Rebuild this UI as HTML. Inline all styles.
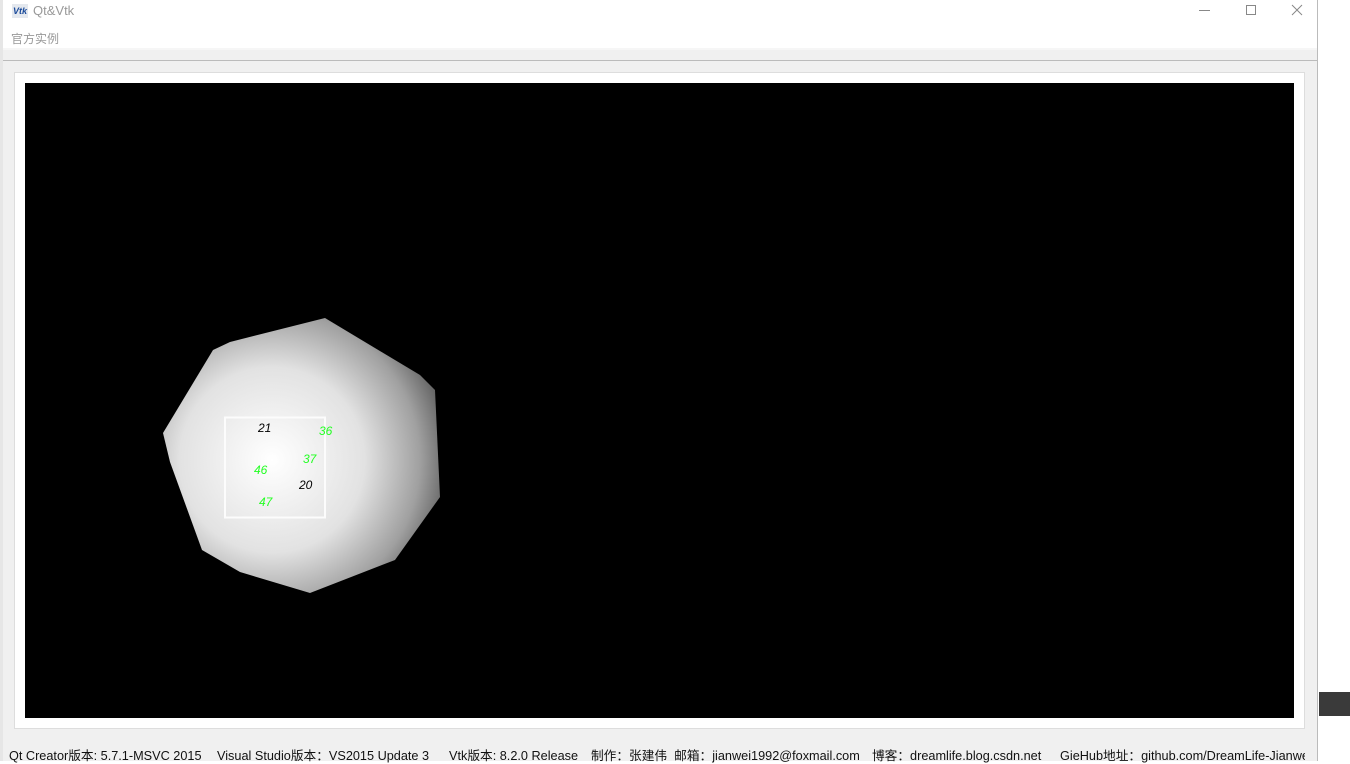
<!DOCTYPE html>
<html><head><meta charset="utf-8"><style>
*{margin:0;padding:0;box-sizing:border-box}
body{width:1350px;height:761px;background:#fff;position:relative;overflow:hidden;font-family:"Liberation Sans","Noto Sans CJK SC",sans-serif}
.win{position:absolute;left:0;top:0;width:1318px;height:761px;background:#f0f0f0;border-right:1px solid #bbb;border-left:3px solid #e6e6e6}
.title{position:absolute;left:0;top:0;width:100%;height:48px;background:#fff}
.t{position:absolute;font-size:13px;color:#999}
.st{position:absolute;top:745px;font-size:12.7px;color:#111;white-space:nowrap}
</style></head><body>
<div class="win">
 <div class="title"></div>
 <div style="position:absolute;left:9px;top:4px;width:16px;height:14px;background:#e4e8ee;color:#1a4a9a;font:bold italic 9px 'Liberation Sans';line-height:14px;text-align:center">Vtk</div>
 <div class="t" style="left:30px;top:3px">Qt&amp;Vtk</div>
 <div class="t" style="left:8px;top:30px;font-size:12px">官方实例</div>
 <div style="position:absolute;left:1196px;top:10px;width:11px;height:1px;background:#888"></div>
 <div style="position:absolute;left:1243px;top:5px;width:10px;height:10px;border:1px solid #888"></div>
 <svg style="position:absolute;left:1288px;top:4px" width="12" height="12"><path d="M1 1L11 11M11 1L1 11" stroke="#888" stroke-width="1"/></svg>
 <div style="position:absolute;left:0;top:48px;width:100%;height:2px;background:#f6f6f6"></div>
 <div style="position:absolute;left:0;top:60px;width:100%;height:1px;background:#bbb"></div>
 <div style="position:absolute;left:11px;top:72px;width:1291px;height:657px;background:#fff;border:1px solid #ddd"></div>
 <div style="position:absolute;left:22px;top:83px;width:1269px;height:635px;background:#000"></div>
 <div class="st" style="left:6px">Qt Creator版本: 5.7.1-MSVC 2015</div>
 <div class="st" style="left:214px">Visual Studio版本：VS2015 Update 3</div>
 <div class="st" style="left:446px">Vtk版本: 8.2.0 Release</div>
 <div class="st" style="left:588px">制作：张建伟&nbsp; 邮箱：jianwei1992@foxmail.com</div>
 <div class="st" style="left:869px">博客：dreamlife.blog.csdn.net</div>
 <div class="st" style="left:1057px;width:245px;overflow:hidden">GieHub地址：github.com/DreamLife-Jianwei</div>
</div>
<div style="position:absolute;left:1319px;top:692px;width:31px;height:24px;background:#3a3a3a"></div>
<svg style="position:absolute;left:0;top:0" width="1350" height="761">
 <defs><radialGradient id="g" gradientUnits="userSpaceOnUse" cx="272" cy="460" r="185">
  <stop offset="0" stop-color="#fff"/><stop offset="0.5" stop-color="#e2e2e2"/><stop offset="0.8" stop-color="#a0a0a0"/><stop offset="1" stop-color="#555"/></radialGradient></defs>
 <polygon points="325,318 230,342 213,350 163,433 170,462 202,550 240,572 310,593 395,560 440,497 435,390 420,375" fill="url(#g)"/>
 <rect x="225" y="417.5" width="100" height="100" fill="none" stroke="#fcfcfc" stroke-width="2"/>
 <g font-family="Liberation Sans" font-style="italic" font-size="12">
  <text x="258" y="432" fill="#000">21</text>
  <text x="319" y="435" fill="#2f2">36</text>
  <text x="303" y="463" fill="#2f2">37</text>
  <text x="254" y="474" fill="#2f2">46</text>
  <text x="299" y="489" fill="#000">20</text>
  <text x="259" y="506" fill="#2f2">47</text>
 </g>
</svg>
</body></html>
